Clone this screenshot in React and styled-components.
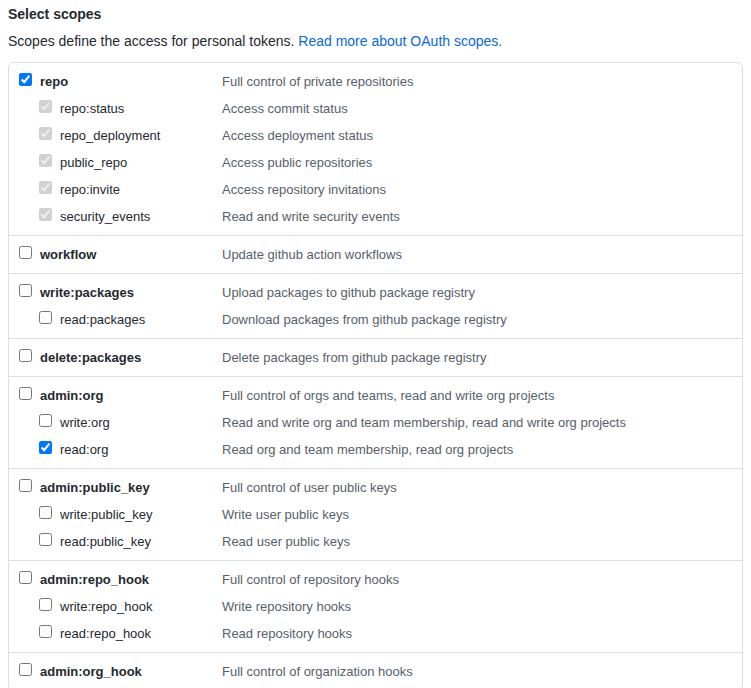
import React from "react";
import styled, { createGlobalStyle } from "styled-components";

const Global = createGlobalStyle`
  body {
    margin: 8px;
    background: #ffffff;
    font-family: "Liberation Sans", Arial, Helvetica, sans-serif;
    color: #24292f;
  }
`;

const Title = styled.div`
  font-size: 14px;
  font-weight: 700;
  line-height: 14px;
  margin-top: -1px;
  color: #24292f;
`;

const Intro = styled.p`
  font-size: 14px;
  line-height: 20px;
  margin: 10px 0 11px 0;
  color: #24292f;
`;

const Link = styled.a`
  color: #0969da;
  text-decoration: none;
`;

const Box = styled.div`
  border: 1px solid #d8dee4;
  border-radius: 6px;
`;

const Group = styled.div`
  padding: 5px 0;
  & + & {
    border-top: 1px solid #d8dee4;
  }
`;

const Row = styled.div`
  display: grid;
  grid-template-columns: 203px 1fr;
  height: 27px;
  align-items: center;
  padding-left: 10px;
  font-size: 13px;
`;

const Label = styled.label`
  display: flex;
  align-items: center;
  gap: 8px;
  padding-left: ${(p) => (p.$child ? 20 : 0)}px;
  color: #24292f;
  font-weight: ${(p) => (p.$child ? 400 : 700)};
`;

const Check = styled.input`
  margin: 0 0 4px 0;
  width: 13px;
  height: 13px;
  flex: none;
`;

const Desc = styled.span`
  color: #57606a;
`;

const groups = [
  [
    ["repo", "Full control of private repositories", true],
    ["repo:status", "Access commit status", "dis"],
    ["repo_deployment", "Access deployment status", "dis"],
    ["public_repo", "Access public repositories", "dis"],
    ["repo:invite", "Access repository invitations", "dis"],
    ["security_events", "Read and write security events", "dis"],
  ],
  [["workflow", "Update github action workflows", false]],
  [
    ["write:packages", "Upload packages to github package registry", false],
    ["read:packages", "Download packages from github package registry", false],
  ],
  [["delete:packages", "Delete packages from github package registry", false]],
  [
    ["admin:org", "Full control of orgs and teams, read and write org projects", false],
    ["write:org", "Read and write org and team membership, read and write org projects", false],
    ["read:org", "Read org and team membership, read org projects", true],
  ],
  [
    ["admin:public_key", "Full control of user public keys", false],
    ["write:public_key", "Write user public keys", false],
    ["read:public_key", "Read user public keys", false],
  ],
  [
    ["admin:repo_hook", "Full control of repository hooks", false],
    ["write:repo_hook", "Write repository hooks", false],
    ["read:repo_hook", "Read repository hooks", false],
  ],
  [["admin:org_hook", "Full control of organization hooks", false]],
];

export default function App() {
  return (
    <>
      <Global />
      <Title>Select scopes</Title>
      <Intro>
        Scopes define the access for personal tokens.{" "}
        <Link href="#">Read more about OAuth scopes.</Link>
      </Intro>
      <Box>
        {groups.map((g, gi) => (
          <Group key={gi}>
            {g.map(([name, desc, state], i) => {
              const child = i > 0;
              return (
                <Row key={name}>
                  <Label $child={child}>
                    <Check
                      type="checkbox"
                      defaultChecked={state === true || state === "dis"}
                      disabled={state === "dis"}
                    />
                    {name}
                  </Label>
                  <Desc>{desc}</Desc>
                </Row>
              );
            })}
          </Group>
        ))}
      </Box>
    </>
  );
}
